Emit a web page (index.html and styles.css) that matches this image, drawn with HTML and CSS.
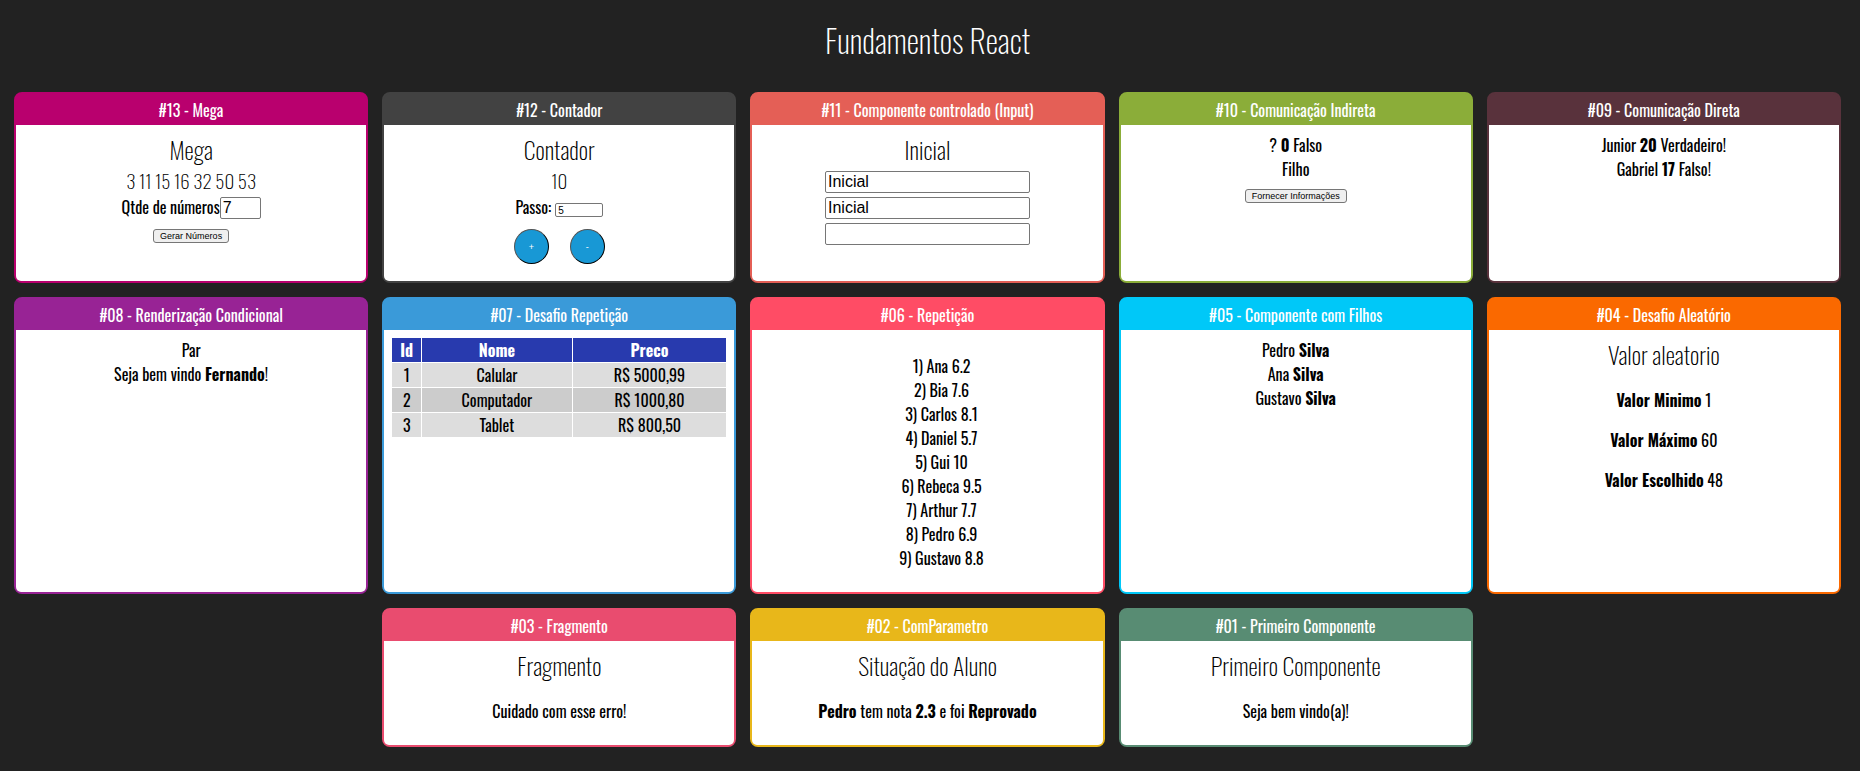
FILE: index.html
```html
<!DOCTYPE html>
<html lang="pt-BR">
<head>
<meta charset="utf-8">
<title>Fundamentos React</title>
<link rel="stylesheet" href="styles.css">
</head>
<body>
<main class="app">
  <h1 class="app-title">Fundamentos React</h1>
  <div class="cards">
    <section class="card mega">
      <div class="card-title">#13 - Mega</div>
      <div class="card-content">
        <h2>Mega</h2>
        <h3>3 11 15 16 32 50 53</h3>
        <div class="field"><label for="qtde">Qtde de números</label><input id="qtde" class="input-qtde" type="text" value="7"></div>
        <div class="actions"><button class="button" type="button">Gerar Números</button></div>
      </div>
    </section>
    <section class="card contador">
      <div class="card-title">#12 - Contador</div>
      <div class="card-content">
        <h2>Contador</h2>
        <h3>10</h3>
        <div class="field field-spaced"><label for="passo">Passo:</label><input id="passo" class="input-passo" type="text" value="5"></div>
        <div class="actions"><button class="round" type="button">+</button><button class="round" type="button">-</button></div>
      </div>
    </section>
    <section class="card input-card">
      <div class="card-title">#11 - Componente controlado (Input)</div>
      <div class="card-content">
        <h2>Inicial</h2>
        <div class="inputs">
          <input type="text" aria-label="Valor controlado" value="Inicial">
          <input type="text" aria-label="Valor somente leitura" value="Inicial" readonly>
          <input type="text" aria-label="Valor livre">
        </div>
      </div>
    </section>
    <section class="card indireta">
      <div class="card-title">#10 - Comunicação Indireta</div>
      <div class="card-content">
        <div>? <strong>0</strong> Falso</div>
        <div>Filho</div>
        <div class="actions actions-near"><button class="button" type="button">Fornecer Informações</button></div>
      </div>
    </section>
    <section class="card direta">
      <div class="card-title">#09 - Comunicação Direta</div>
      <div class="card-content">
        <div>Junior <strong>20</strong> Verdadeiro!</div>
        <div>Gabriel <strong>17</strong> Falso!</div>
      </div>
    </section>
    <section class="card condicional">
      <div class="card-title">#08 - Renderização Condicional</div>
      <div class="card-content">
        <div>Par</div>
        <div>Seja bem vindo <strong>Fernando</strong>!</div>
      </div>
    </section>
    <section class="card desafio">
      <div class="card-title">#07 - Desafio Repetição</div>
      <div class="card-content">
        <div class="table-wrap">
          <table class="produtos">
            <thead><tr><th class="col-id">Id</th><th class="col-nome">Nome</th><th>Preco</th></tr></thead>
            <tbody>
              <tr><td>1</td><td>Calular</td><td>R$ 5000,99</td></tr>
              <tr><td>2</td><td>Computador</td><td>R$ 1000,80</td></tr>
              <tr><td>3</td><td>Tablet</td><td>R$ 800,50</td></tr>
            </tbody>
          </table>
        </div>
      </div>
    </section>
    <section class="card repeticao">
      <div class="card-title">#06 - Repetição</div>
      <div class="card-content">
        <ul class="alunos">
          <li>1) Ana 6.2</li>
          <li>2) Bia 7.6</li>
          <li>3) Carlos 8.1</li>
          <li>4) Daniel 5.7</li>
          <li>5) Gui 10</li>
          <li>6) Rebeca 9.5</li>
          <li>7) Arthur 7.7</li>
          <li>8) Pedro 6.9</li>
          <li>9) Gustavo 8.8</li>
        </ul>
      </div>
    </section>
    <section class="card filhos">
      <div class="card-title">#05 - Componente com Filhos</div>
      <div class="card-content">
        <div>Pedro <strong>Silva</strong></div>
        <div>Ana <strong>Silva</strong></div>
        <div>Gustavo <strong>Silva</strong></div>
      </div>
    </section>
    <section class="card aleatorio">
      <div class="card-title">#04 - Desafio Aleatório</div>
      <div class="card-content">
        <h2>Valor aleatorio</h2>
        <p><strong>Valor Minimo</strong> 1</p>
        <p><strong>Valor Máximo</strong> 60</p>
        <p><strong>Valor Escolhido</strong> 48</p>
      </div>
    </section>
    <section class="card fragmento">
      <div class="card-title">#03 - Fragmento</div>
      <div class="card-content">
        <h2>Fragmento</h2>
        <p>Cuidado com esse erro!</p>
      </div>
    </section>
    <section class="card parametro">
      <div class="card-title">#02 - ComParametro</div>
      <div class="card-content">
        <h2>Situação do Aluno</h2>
        <p><strong>Pedro</strong> tem nota <strong>2.3</strong> e foi <strong>Reprovado</strong></p>
      </div>
    </section>
    <section class="card primeiro">
      <div class="card-title">#01 - Primeiro Componente</div>
      <div class="card-content">
        <h2>Primeiro Componente</h2>
        <p>Seja bem vindo(a)!</p>
      </div>
    </section>
  </div>
</main>
</body>
</html>
```
FILE: styles.css
```css
* {
  box-sizing: border-box;
}

body {
  margin: 0;
  background: #222;
  color: #000;
  font-family: Oswald, "Roboto Condensed", sans-serif;
  font-size: 16px;
  line-height: 24px;
}

.app {
  padding: 16px 19px 0 14px;
  text-align: center;
}

.app-title {
  margin: 0 0 28px;
  color: #fff;
  font-size: 32px;
  font-weight: 200;
  line-height: 48px;
}

.cards {
  display: flex;
  flex-wrap: wrap;
  justify-content: center;
  gap: 14px;
}

.card {
  --color: #424242;
  display: flex;
  flex-direction: column;
  width: calc((100% - 56px) / 5);
  border: 2px solid var(--color);
  border-radius: 8px;
  background: var(--color);
}

.card-title {
  padding: 4px 4px 3px;
  color: #fff;
}

.card-content {
  flex: 1;
  padding: 8px 6px 6px;
  border-radius: 0 0 5px 5px;
  background: #fff;
}

.mega { --color: #b9006e; }
.contador { --color: #424242; }
.input-card { --color: #e45f56; }
.indireta { --color: #8bad39; }
.direta { --color: #59323c; }
.condicional { --color: #982395; }
.desafio { --color: #3a9ad9; }
.repeticao { --color: #ff4c65; }
.filhos { --color: #00c8f8; }
.aleatorio { --color: #fa6900; }
.fragmento { --color: #e94c6f; }
.parametro { --color: #e8b71a; }
.primeiro { --color: #588c73; }

h2 {
  margin: 0;
  padding-bottom: 2px;
  font-size: 24px;
  font-weight: 200;
  line-height: 32px;
}

h3 {
  margin: 0 0 2px;
  font-size: 19px;
  font-weight: 200;
  line-height: 26px;
}

p {
  margin: 16px 0;
}

input {
  height: 22px;
  padding: 1px 2px;
  border: 1px solid #767676;
  border-radius: 2px;
  background: #fff;
  color: #000;
  font-family: "Liberation Sans", Arial, sans-serif;
  font-size: 16px;
}

.field {
  display: flex;
  justify-content: center;
  align-items: center;
  height: 24px;
}

.field-spaced {
  gap: 4px;
}

.input-qtde {
  width: 41px;
  margin-top: 2px;
}

.input-passo {
  width: 48px;
  height: 14px;
  margin-top: 6px;
  font-size: 10px;
}

.inputs {
  display: flex;
  flex-direction: column;
  align-items: center;
  gap: 4px;
  padding-top: 4px;
}

.inputs input {
  width: 205px;
}

.actions {
  display: flex;
  justify-content: center;
  gap: 21px;
  padding: 10px 0 11px;
}

.actions-near {
  padding-top: 8px;
}

.button {
  height: 14px;
  padding: 0 6px;
  border: 1px solid #767676;
  border-radius: 3px;
  background: #efefef;
  color: #000;
  font-family: "Liberation Sans", Arial, sans-serif;
  font-size: 9px;
  line-height: 12px;
}

.round {
  width: 35px;
  height: 35px;
  padding: 0;
  border: 1px outset #000;
  border-radius: 50%;
  background: #1898d5;
  color: #fff;
  font-family: "Liberation Sans", Arial, sans-serif;
  font-size: 9px;
}

.table-wrap {
  padding: 0 2px;
}

.produtos {
  width: 100%;
  table-layout: fixed;
  border-collapse: separate;
  border-spacing: 0;
}

.produtos th,
.produtos td {
  padding: 0;
}

.produtos th {
  background: #283aae;
  color: #fff;
}

.produtos td {
  border-top: 1px solid #fff;
}

.produtos th + th,
.produtos td + td {
  border-left: 1px solid #fff;
}

.produtos .col-id {
  width: 29px;
}

.produtos .col-nome {
  width: 45%;
}

.produtos tbody tr {
  background: #ddd;
}

.produtos tbody tr:nth-child(even) {
  background: #ccc;
}

.alunos {
  margin: 16px 0;
  padding: 0 0 0 28px;
  list-style: none;
}
```
